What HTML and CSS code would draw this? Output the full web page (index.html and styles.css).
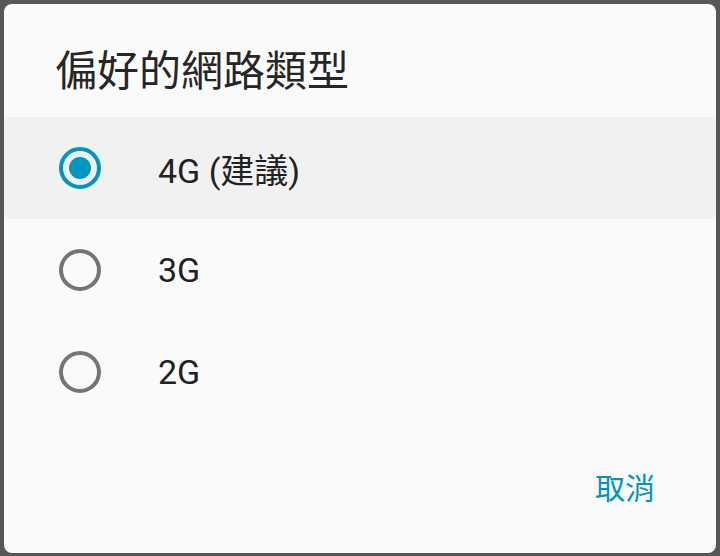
FILE: index.html
```html
<!DOCTYPE html>
<html lang="zh-Hant">
<head>
    <meta charset="UTF-8">
    <title>偏好的網路類型</title>
    <link rel="stylesheet" href="styles.css">
</head>
<body>
    <div class="dialog">
        <h1 class="dialog-title">偏好的網路類型</h1>
        <div class="options">
            <label class="option selected">
                <span class="radio checked"></span>
                <span class="option-text">4G (建議)</span>
            </label>
            <label class="option">
                <span class="radio"></span>
                <span class="option-text">3G</span>
            </label>
            <label class="option">
                <span class="radio"></span>
                <span class="option-text">2G</span>
            </label>
        </div>
        <div class="actions">
            <button class="text-button">取消</button>
        </div>
    </div>
</body>
</html>
```

FILE: styles.css
```css
html, body {
    margin: 0;
    padding: 0;
    height: 100%;
}
body {
    background-color: #575757;
    font-family: Roboto, "Noto Sans CJK TC", sans-serif;
    color: #212121;
    padding: 4px 4px 0 4px;
    box-sizing: border-box;
}
.dialog {
    background-color: #fafafa;
    border-radius: 8px;
    height: 549px;
    display: flex;
    flex-direction: column;
    overflow: hidden;
}
.dialog-title {
    margin: 0;
    padding: 40px 57px 17px 51px;
    font-size: 42px;
    line-height: 56px;
    font-weight: normal;
    color: #262626;
}
.option {
    display: flex;
    align-items: center;
    height: 102px;
    padding-left: 55px;
}
.option.selected {
    background-color: #f1f1f1;
}
.radio {
    width: 42px;
    height: 42px;
    box-sizing: border-box;
    border: 4px solid #757575;
    border-radius: 50%;
    display: flex;
    align-items: center;
    justify-content: center;
    flex-shrink: 0;
}
.radio.checked {
    border-color: #0096bf;
}
.radio.checked::after {
    content: "";
    width: 22px;
    height: 22px;
    border-radius: 50%;
    background-color: #0096bf;
}
.option-text {
    margin-left: 57px;
    font-size: 34px;
    color: #212121;
}
.actions {
    flex: 1;
    display: flex;
    justify-content: flex-end;
    align-items: flex-start;
    padding: 46px 47px 0 0;
}
.text-button {
    background: none;
    border: none;
    font-family: Roboto, "Noto Sans CJK TC", sans-serif;
    font-size: 30px;
    color: #0096bf;
    padding: 0 14px;
    line-height: 40px;
    cursor: pointer;
}
```
